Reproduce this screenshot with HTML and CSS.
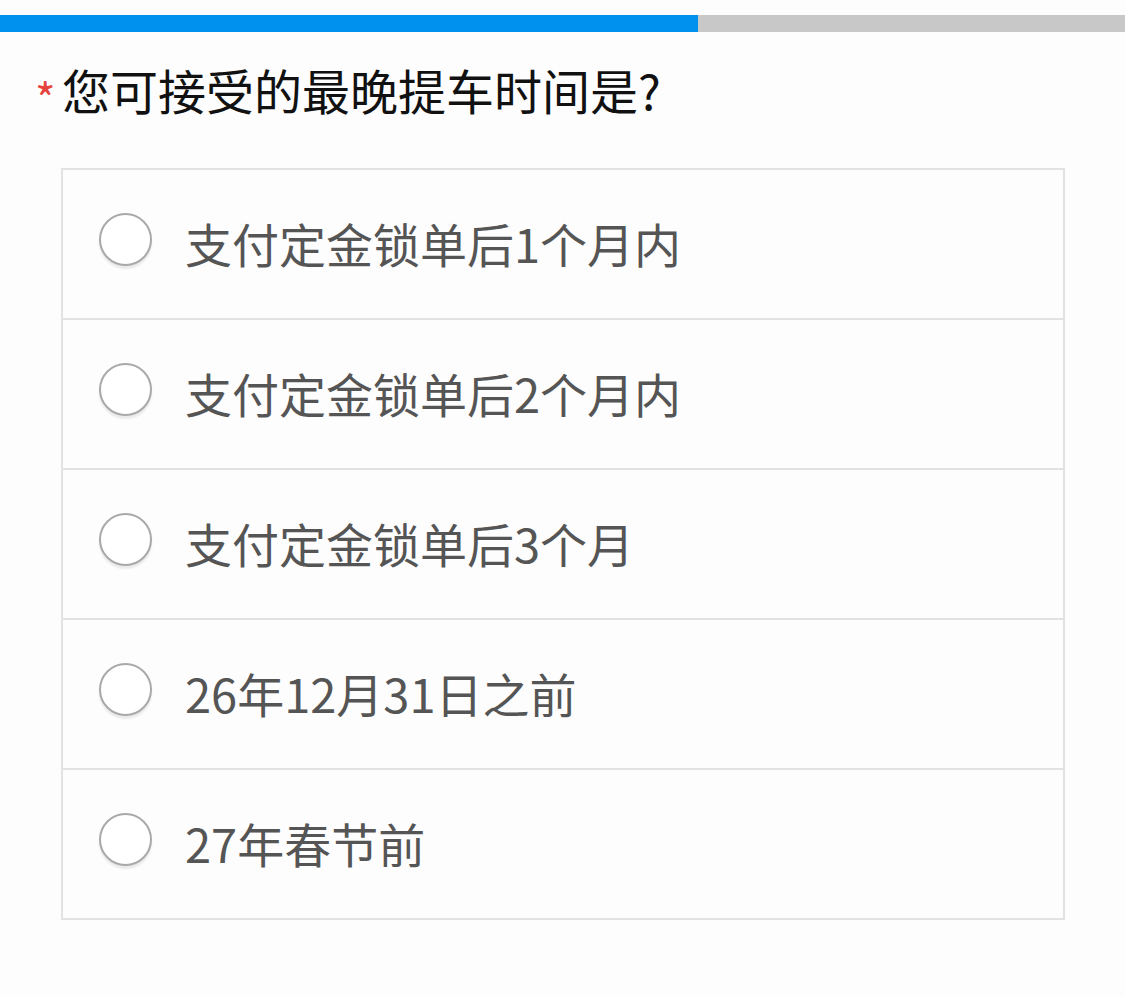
FILE: index.html
```html
<!DOCTYPE html>
<html lang="zh-CN">
<head>
    <meta charset="UTF-8">
    <meta name="viewport" content="width=device-width, initial-scale=1.0">
    <title>问卷</title>
    <link rel="stylesheet" href="styles.css">
</head>
<body>
    <div class="progress">
        <div class="progress-bar"></div>
    </div>

    <div class="question">
        <h2 class="question-title"><span class="required">*</span>您可接受的最晚提车时间是?</h2>

        <ul class="options">
            <li class="option"><span class="radio"></span><span class="label">支付定金锁单后1个月内</span></li>
            <li class="option"><span class="radio"></span><span class="label">支付定金锁单后2个月内</span></li>
            <li class="option"><span class="radio"></span><span class="label">支付定金锁单后3个月</span></li>
            <li class="option"><span class="radio"></span><span class="label">26年12月31日之前</span></li>
            <li class="option"><span class="radio"></span><span class="label">27年春节前</span></li>
        </ul>
    </div>
</body>
</html>
```

FILE: styles.css
```css
* {
    margin: 0;
    padding: 0;
    box-sizing: border-box;
}

body {
    font-family: "Noto Sans CJK SC", "Noto Sans", sans-serif;
    background-color: #fdfdfd;
    color: #111;
}

.progress {
    margin-top: 15px;
    height: 17px;
    background-color: #c8c8c8;
}

.progress-bar {
    width: 62%;
    height: 100%;
    background-color: #0091ef;
}

.question {
    padding: 27px 60px 0 35px;
}

.question-title {
    display: flex;
    align-items: center;
    height: 60px;
    font-size: 48px;
    font-weight: normal;
    line-height: 60px;
    color: #111;
}

.required {
    width: 27px;
    font-size: 44px;
    color: #e6433e;
    position: relative;
    top: 8px;
}

.options {
    list-style: none;
    margin: 49px 0 0 26px;
    border: 2px solid #e2e2e2;
    background-color: #fdfdfd;
}

.option {
    display: flex;
    align-items: center;
    height: 150px;
    padding: 0 0 0 36px;
    border-bottom: 2px solid #e2e2e2;
}

.option:last-child {
    height: 148px;
    border-bottom: none;
}

.radio {
    flex: none;
    width: 53px;
    height: 53px;
    margin-bottom: 10px;
    border: 2px solid #a9a9a9;
    border-radius: 50%;
    background-color: #fff;
    box-shadow: 0 3px 2px rgba(0, 0, 0, 0.08);
}

.label {
    margin-left: 33px;
    margin-bottom: 4px;
    font-size: 47px;
    color: #555;
}
```
